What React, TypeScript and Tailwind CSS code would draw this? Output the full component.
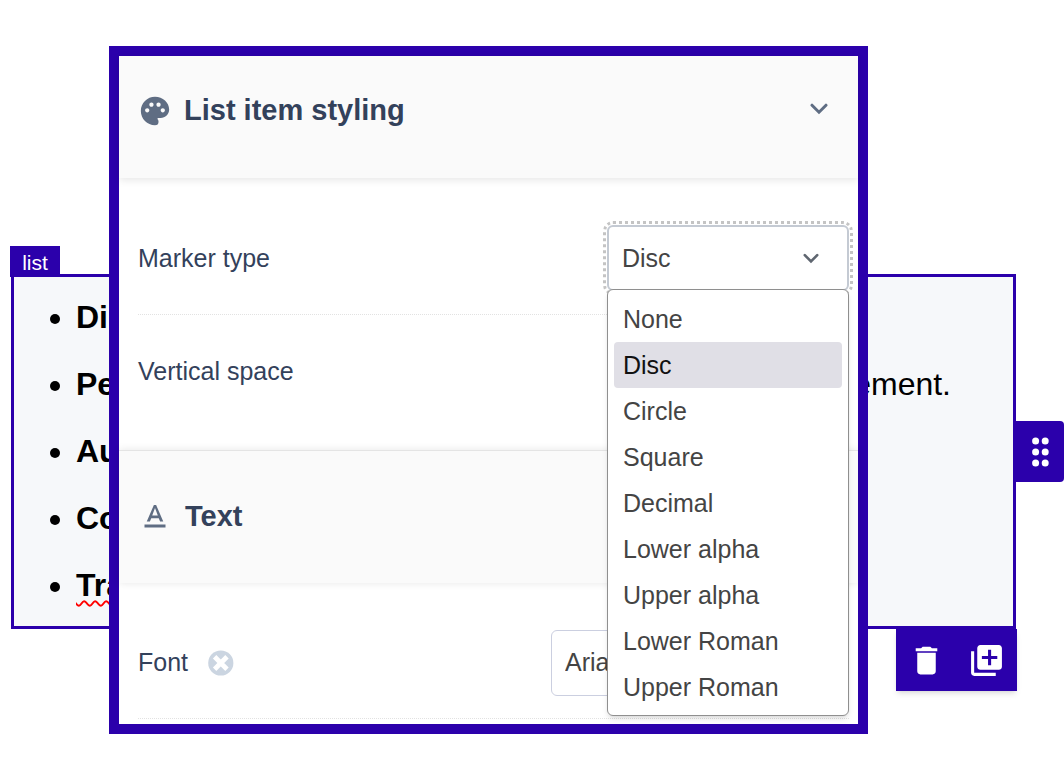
import { useState, type ReactNode } from 'react'
import { MdDelete, MdLibraryAdd, MdPalette, MdTextFormat } from 'react-icons/md'

const MARKER_TYPES = [
  'None',
  'Disc',
  'Circle',
  'Square',
  'Decimal',
  'Lower alpha',
  'Upper alpha',
  'Lower Roman',
  'Upper Roman',
]

type ListItem = {
  lead: string
  rest?: string
  misspelled?: boolean
}

const LIST_ITEMS: ListItem[] = [
  { lead: 'Di' },
  { lead: 'Pe', rest: 'ement.' },
  { lead: 'Au' },
  { lead: 'Co' },
  { lead: 'Tra', misspelled: true },
]

function Chevron({ className }: { className: string }) {
  return (
    <svg viewBox="0 0 18 12" fill="none" className={className} aria-hidden="true">
      <path d="M2 2.2 9 9.2l7-7" stroke="currentColor" strokeWidth="3" strokeLinecap="round" />
    </svg>
  )
}

function GripDots() {
  return (
    <svg viewBox="0 0 18 30" className="w-[18px] h-[30px]" fill="currentColor" aria-hidden="true">
      {[4, 15, 26].map((y) => (
        <g key={y}>
          <circle cx="4.6" cy={y} r="3.5" />
          <circle cx="14.2" cy={y} r="3.5" />
        </g>
      ))}
    </svg>
  )
}

function ResetIcon() {
  return (
    <svg viewBox="0 0 26 26" className="w-[26px] h-[26px]" aria-hidden="true">
      <circle cx="12.8" cy="13" r="12.6" fill="#cbd5e1" />
      <path d="m6.6 6.8 12.4 12.4M19 6.8 6.6 19.2" stroke="#fff" strokeWidth="4.8" />
    </svg>
  )
}

function Row({ children }: { children: ReactNode }) {
  return (
    <div className="flex items-center justify-between pt-6 pb-[23px] border-b border-dotted border-[#e2e2e2] last:border-transparent">
      {children}
    </div>
  )
}

function ListBlock() {
  return (
    <section className="col-start-1 row-start-1 flex flex-col items-start pt-[246px] pl-[11px]">
      <span className="-ml-px -mb-[3px] flex h-[31px] w-[50px] items-center justify-center bg-[#2b00ab] pt-0.5 text-[21px] text-white">
        list
      </span>
      <div className="flex w-full items-center">
        <ul className="flex-1 list-disc border-3 border-[#2b00ab] bg-[#f6f8fa] pt-[7px] pb-[7px] pl-[62px] pr-[62px] text-[32px] leading-[67px] text-black">
          {LIST_ITEMS.map((item) => (
            <li key={item.lead}>
              <div className="flex justify-between">
                <b
                  className={
                    item.misspelled
                      ? 'underline decoration-wavy decoration-[#f00] decoration-2 underline-offset-4'
                      : ''
                  }
                >
                  {item.lead}
                </b>
                {item.rest && <span>{item.rest}</span>}
              </div>
            </li>
          ))}
        </ul>
        <button
          type="button"
          aria-label="Move"
          className="flex h-[61px] w-12 items-center justify-center rounded-r bg-[#2b00ab] text-white"
        >
          <GripDots />
        </button>
      </div>
      <div className="mr-[47px] flex h-[62px] w-[121px] items-center justify-around self-end bg-[#2b00ab] text-white shadow-md shadow-black/10">
        <button type="button" aria-label="Delete">
          <MdDelete className="size-[37px]" />
        </button>
        <button type="button" aria-label="Duplicate">
          <MdLibraryAdd className="size-[37px]" />
        </button>
      </div>
    </section>
  )
}

function MarkerSelect() {
  const [value, setValue] = useState('Disc')

  return (
    <div className="relative w-[242px]">
      <select
        id="marker-type"
        value={value}
        onChange={(e) => setValue(e.target.value)}
        className="h-[66px] w-full appearance-none rounded-md border-2 border-[#c4cad3] bg-white pt-0.5 pl-[13px] text-[25px] text-[#444] outline-3 outline-offset-1 outline-dotted outline-[#c4c4c4]"
      >
        {MARKER_TYPES.map((type) => (
          <option key={type}>{type}</option>
        ))}
      </select>
      <Chevron className="pointer-events-none absolute top-7 right-[30px] h-[11px] w-4 text-[#5f6670]" />

      {/* Open menu */}
      <ul
        role="listbox"
        aria-label="Marker type"
        className="absolute top-16 left-0 z-10 w-full rounded-md border border-[#8f8f8f] bg-white p-1.5 pb-[5px] shadow-md"
      >
        {MARKER_TYPES.map((type) => (
          <li
            key={type}
            role="option"
            aria-selected={type === value}
            onClick={() => setValue(type)}
            className={`flex h-[46px] items-center rounded px-[9px] pt-px text-[25px] ${
              type === value ? 'bg-[#e0dfe6] text-[#111]' : 'text-[#444]'
            }`}
          >
            {type}
          </li>
        ))}
      </ul>
    </div>
  )
}

function StylePanel() {
  return (
    <aside className="z-10 col-start-1 row-start-1 mt-[46px] mr-[196px] ml-[109px] self-start border-10 border-[#2b00ab] bg-white text-[25px] text-[#33415b]">
      {/* List item styling */}
      <header className="flex h-[122px] items-center bg-[#fafafa] pr-[30px] pb-3 pl-[19px] shadow-[0_2px_8px_rgba(0,0,0,0.1)]">
        <MdPalette className="size-[34px] text-[#5f6d83]" />
        <h2 className="ml-3 flex-1 text-[29px] font-bold">List item styling</h2>
        <button type="button" aria-label="Collapse" className="pb-1">
          <Chevron className="h-3 w-[18px] text-[#5f6d83]" />
        </button>
      </header>
      <div className="pt-[23px] pr-[9px] pb-[21px] pl-[19px]">
        <Row>
          <label htmlFor="marker-type" className="pt-0.5">
            Marker type
          </label>
          <MarkerSelect />
        </Row>
        <Row>
          <span className="flex h-[66px] items-center">Vertical space</span>
        </Row>
      </div>

      {/* Text */}
      <header className="flex h-[133px] items-center border-t border-[#e4e4e4] bg-[#fafafa] pl-[18px] shadow-[0_0_8px_rgba(0,0,0,0.1)]">
        <MdTextFormat className="size-9 text-[#5f6d83]" />
        <h2 className="ml-3 text-[29px] font-bold">Text</h2>
      </header>
      <div className="pt-[23px] pr-[9px] pb-[5px] pl-[19px]">
        <div className="flex items-center justify-between border-b border-dotted border-[#e2e2e2] pt-6 pb-[22px]">
          <div className="flex items-center gap-5">
            <label htmlFor="font">Font</label>
            <button type="button" aria-label="Reset font">
              <ResetIcon />
            </button>
          </div>
          <select
            id="font"
            className="h-[66px] w-[298px] appearance-none rounded-md border border-[#cbcfe0] bg-white pl-[13px] text-[25px] text-[#444]"
          >
            <option>Arial</option>
          </select>
        </div>
      </div>
    </aside>
  )
}

export default function App() {
  return (
    <main className="grid min-h-screen bg-white font-['Liberation_Sans',Arial,sans-serif]">
      <ListBlock />
      <StylePanel />
    </main>
  )
}
